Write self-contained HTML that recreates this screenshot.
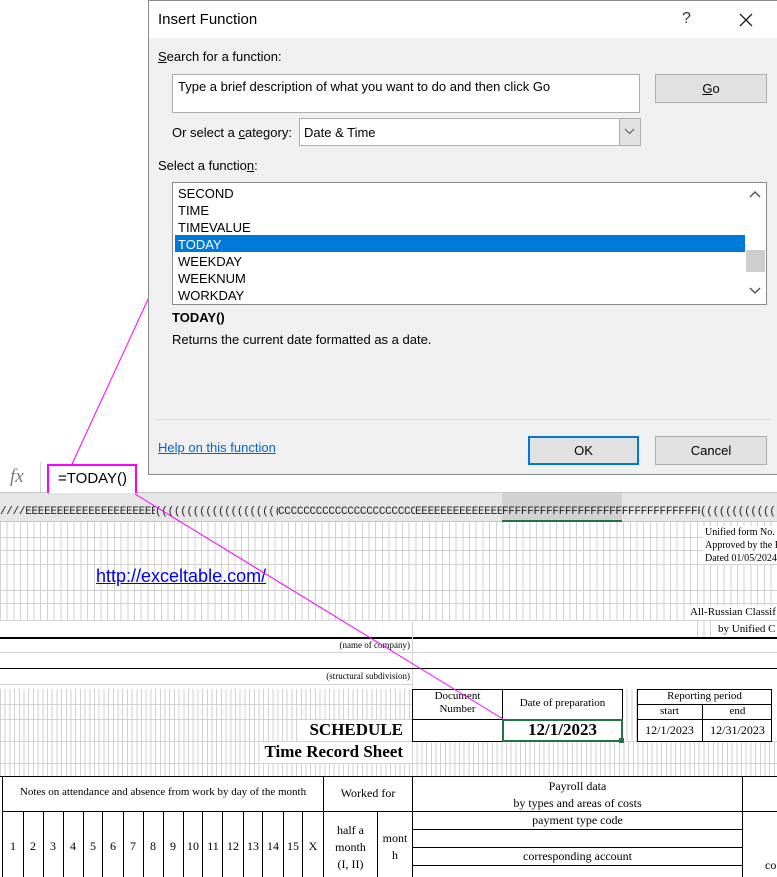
<!DOCTYPE html>
<html><head><meta charset="utf-8"><style>
*{margin:0;padding:0;box-sizing:border-box}
body{width:777px;height:877px;overflow:hidden;background:#fff;position:relative;font-family:"Liberation Sans",sans-serif}
.a{position:absolute}
.s{font-family:"Liberation Serif",serif;color:#000;white-space:nowrap}
.g1{background-color:#fff;background-image:repeating-linear-gradient(90deg,#d2d2d2 0 1px,transparent 1px 6.7px)}
.g2{background-color:#fff;background-image:repeating-linear-gradient(90deg,#d2d2d2 0 1px,transparent 1px 4.7px)}
.h{height:1px;background:#d2d2d2}
.bk{background:#000}
.d{font-size:13px;color:#000;white-space:nowrap}
.btn{background:#e1e1e1;border:1px solid #adadad;text-align:center;font-size:13px}
.c{text-align:center}
.hl{position:absolute;top:505px;height:15px;overflow:hidden;font-family:"Liberation Mono",monospace;font-size:11px;line-height:15px;color:#222;white-space:nowrap;letter-spacing:-0.3px}
</style></head><body>

<!-- formula bar -->
<div class="a" style="left:0;top:462px;width:777px;height:31px;background:#fff;border-bottom:1px solid #c6c6c6"></div>
<div class="a" style="left:0;top:462px;width:41px;height:30px;border-right:1px solid #d4d4d4;font-family:'Liberation Serif',serif;font-style:italic;color:#777;font-size:19px;padding:4px 0 0 10px">fx</div>
<div class="a" style="left:47px;top:464px;width:90px;height:31px;border:2px solid #f0f;background:#fff;font-size:15px;padding:4px 0 0 9px">=TODAY()</div>

<!-- column header -->
<div class="a" style="left:0;top:493px;width:777px;height:29px;background:#e6e6e6;border-bottom:1px solid #c8c8c8"></div>
<div class="a" style="left:502px;top:493px;width:120px;height:29px;background:#d2d2d2;border-bottom:2px solid #217346"></div>
<div class="hl" style="left:0;width:155px">////EEEEEEEEEEEEEEEEEEEEEEEEEEEEEE</div>
<div class="hl" style="left:155px;width:123px">((((((((((((((((((((((((((((</div>
<div class="hl" style="left:278px;width:137px">CCCCCCCCCCCCCCCCCCCCCCCCCCCC</div>
<div class="hl" style="left:415px;width:87px">EEEEEEEEEEEEEEEEEEEE</div>
<div class="hl" style="left:502px;width:198px">FFFFFFFFFFFFFFFFFFFFFFFFFFFFFFFFFFFFFFFFFF</div>
<div class="hl" style="left:700px;width:77px">((((((((((((((((((</div>

<!-- upper grid -->
<div class="a g1" style="left:0;top:522px;width:777px;height:115px"></div>
<div class="a h" style="left:0;top:537px;width:777px"></div>
<div class="a h" style="left:0;top:550px;width:777px"></div>
<div class="a h" style="left:0;top:564px;width:777px"></div>
<div class="a h" style="left:0;top:590px;width:777px"></div>
<div class="a h" style="left:0;top:603px;width:777px"></div>
<div class="a h" style="left:0;top:620px;width:777px"></div>
<div class="a" style="left:703px;top:526px;width:74px;height:38px;background:#fff"></div>
<div class="a s" style="left:705px;top:526px;font-size:10px;line-height:13px">Unified form No. T<br>Approved by the R<br>Dated 01/05/2024</div>
<div class="a" style="left:96px;top:566px;font-size:18px;color:#00e;text-decoration:underline">http://exceltable.com/</div>
<div class="a" style="left:688px;top:606px;width:89px;height:14px;background:#fff"></div>
<div class="a s" style="left:690px;top:606px;font-size:11px">All-Russian Classif</div>
<div class="a" style="left:0;top:621px;width:697px;height:16px;background:#fff"></div>
<div class="a" style="left:412px;top:621px;width:1px;height:16px;background:#d4d4d4"></div>
<div class="a" style="left:713px;top:621px;width:64px;height:16px;background:#fff"></div>
<div class="a s" style="left:718px;top:623px;font-size:11px">by Unified C</div>

<!-- company rows -->
<div class="a" style="left:0;top:637px;width:777px;height:52px;background:#fff"></div>
<div class="a bk" style="left:0;top:637px;width:777px;height:2px"></div>
<div class="a" style="left:412px;top:637px;width:1px;height:52px;background:#d4d4d4"></div>
<div class="a h" style="left:0;top:652px;width:777px"></div>
<div class="a s" style="left:300px;top:640px;width:110px;text-align:right;font-size:9px">(name of company)</div>
<div class="a bk" style="left:0;top:668px;width:777px;height:1px"></div>
<div class="a s" style="left:250px;top:671px;width:160px;text-align:right;font-size:9px">(structural subdivision)</div>
<div class="a h" style="left:0;top:684px;width:412px"></div>

<!-- schedule area grid -->
<div class="a g2" style="left:0;top:689px;width:412px;height:87px"></div>
<div class="a g2" style="left:622px;top:689px;width:15px;height:87px"></div>
<div class="a g2" style="left:412px;top:741px;width:365px;height:35px"></div>
<div class="a h" style="left:0;top:704px;width:412px"></div>
<div class="a h" style="left:0;top:719px;width:412px"></div>
<div class="a h" style="left:0;top:741px;width:777px"></div>
<div class="a h" style="left:0;top:763px;width:777px"></div>
<div class="a" style="left:300px;top:720px;width:110px;height:21px;background:#fff"></div>
<div class="a s" style="left:200px;top:720px;width:203px;text-align:right;font-size:17px;font-weight:bold">SCHEDULE</div>
<div class="a" style="left:260px;top:742px;width:150px;height:21px;background:#fff"></div>
<div class="a s" style="left:200px;top:742px;width:203px;text-align:right;font-size:17px;font-weight:bold">Time Record Sheet</div>

<div class="a" style="left:412px;top:689px;width:211px;height:53px;border:1px solid #000;background:#fff"></div>
<div class="a bk" style="left:502px;top:689px;width:1px;height:52px"></div>
<div class="a bk" style="left:412px;top:719px;width:211px;height:1px"></div>
<div class="a s c" style="left:413px;top:690px;width:89px;font-size:11px;line-height:13px">Document<br>Number</div>
<div class="a s c" style="left:503px;top:697px;width:119px;font-size:11px">Date of preparation</div>
<div class="a" style="left:502px;top:719px;width:121px;height:23px;border:2px solid #217346"></div>
<div class="a" style="left:619px;top:738px;width:5px;height:5px;background:#217346"></div>
<div class="a s c" style="left:503px;top:720px;width:119px;font-size:17px;font-weight:bold">12/1/2023</div>

<div class="a" style="left:637px;top:689px;width:135px;height:53px;border:1px solid #000;background:#fff"></div>
<div class="a bk" style="left:637px;top:704px;width:135px;height:1px"></div>
<div class="a bk" style="left:637px;top:719px;width:135px;height:1px"></div>
<div class="a bk" style="left:702px;top:704px;width:1px;height:38px"></div>
<div class="a s c" style="left:637px;top:690px;width:135px;font-size:11px">Reporting period</div>
<div class="a s c" style="left:637px;top:705px;width:65px;font-size:11px">start</div>
<div class="a s c" style="left:703px;top:705px;width:69px;font-size:11px">end</div>
<div class="a s c" style="left:637px;top:723px;width:65px;font-size:12px">12/1/2023</div>
<div class="a s c" style="left:703px;top:723px;width:69px;font-size:12px">12/31/2023</div>

<!-- lower table -->
<div class="a" style="left:0;top:776px;width:777px;height:101px;background:#fff"></div>
<div class="a bk" style="left:0;top:776px;width:777px;height:1px"></div>
<div class="a bk" style="left:2px;top:776px;width:1px;height:101px"></div>
<div class="a bk" style="left:323px;top:776px;width:1px;height:101px"></div>
<div class="a bk" style="left:412px;top:776px;width:1px;height:101px"></div>
<div class="a bk" style="left:742px;top:776px;width:1px;height:101px"></div>
<div class="a bk" style="left:2px;top:811px;width:410px;height:1px"></div>
<div class="a bk" style="left:412px;top:811px;width:365px;height:1px"></div>
<div class="a bk" style="left:412px;top:829px;width:330px;height:1px"></div>
<div class="a bk" style="left:412px;top:847px;width:330px;height:1px"></div>
<div class="a bk" style="left:412px;top:865px;width:330px;height:1px"></div>
<div class="a bk" style="left:377px;top:811px;width:1px;height:66px"></div>
<div class="a s c" style="left:3px;top:786px;width:320px;font-size:11px">Notes on attendance and absence from work by day of the month</div>
<div class="a s c" style="left:324px;top:786px;width:88px;font-size:12px">Worked for</div>
<div class="a s c" style="left:413px;top:778px;width:329px;font-size:12px;line-height:17px">Payroll data<br>by types and areas of costs</div>
<div class="a s c" style="left:413px;top:813px;width:329px;font-size:12px">payment type code</div>
<div class="a s c" style="left:413px;top:849px;width:329px;font-size:12px">corresponding account</div>
<div class="a s c" style="left:324px;top:822px;width:53px;font-size:12px;line-height:17px">half a<br>month<br>(I, II)</div>
<div class="a s c" style="left:378px;top:830px;width:34px;font-size:12px;line-height:17px">mont<br>h</div>
<div class="a s" style="left:765px;top:858px;font-size:12px">co</div>

<div class="a bk" style="left:23px;top:811px;width:1px;height:66px"></div>
<div class="a bk" style="left:43px;top:811px;width:1px;height:66px"></div>
<div class="a bk" style="left:63px;top:811px;width:1px;height:66px"></div>
<div class="a bk" style="left:83px;top:811px;width:1px;height:66px"></div>
<div class="a bk" style="left:102px;top:811px;width:1px;height:66px"></div>
<div class="a bk" style="left:123px;top:811px;width:1px;height:66px"></div>
<div class="a bk" style="left:143px;top:811px;width:1px;height:66px"></div>
<div class="a bk" style="left:163px;top:811px;width:1px;height:66px"></div>
<div class="a bk" style="left:183px;top:811px;width:1px;height:66px"></div>
<div class="a bk" style="left:202px;top:811px;width:1px;height:66px"></div>
<div class="a bk" style="left:222px;top:811px;width:1px;height:66px"></div>
<div class="a bk" style="left:243px;top:811px;width:1px;height:66px"></div>
<div class="a bk" style="left:262px;top:811px;width:1px;height:66px"></div>
<div class="a bk" style="left:283px;top:811px;width:1px;height:66px"></div>
<div class="a bk" style="left:302px;top:811px;width:1px;height:66px"></div>
<div class="a s" style="left:3px;top:839px;width:320px;font-size:12px;display:flex">
<span class="c" style="width:20px">1</span><span class="c" style="width:20px">2</span><span class="c" style="width:20px">3</span><span class="c" style="width:20px">4</span><span class="c" style="width:20px">5</span><span class="c" style="width:20px">6</span><span class="c" style="width:20px">7</span><span class="c" style="width:20px">8</span><span class="c" style="width:20px">9</span><span class="c" style="width:20px">10</span><span class="c" style="width:20px">11</span><span class="c" style="width:20px">12</span><span class="c" style="width:20px">13</span><span class="c" style="width:20px">14</span><span class="c" style="width:20px">15</span><span class="c" style="width:20px">X</span></div>

<!-- pink connector lines -->
<svg class="a" style="left:0;top:0" width="777" height="877"><line x1="150" y1="295" x2="72" y2="464" stroke="#f0f" stroke-width="1"/><line x1="135" y1="494" x2="503" y2="719" stroke="#f0f" stroke-width="1"/></svg>

<!-- dialog -->
<div class="a" style="left:148px;top:0;width:640px;height:475px;background:#f0f0f0;border:1px solid #8a8a8a">
  <div class="a" style="left:0;top:0;width:640px;height:37px;background:#fff"></div>
  <div class="a" style="left:9px;top:10px;font-size:15px;color:#000">Insert Function</div>
  <div class="a" style="left:533px;top:9px;font-size:16px;color:#333">?</div>
  <svg class="a" style="left:590px;top:12px" width="14" height="14"><path d="M1 1L13 13M13 1L1 13" stroke="#222" stroke-width="1.3"/></svg>
  <div class="a d" style="left:9px;top:48px"><u>S</u>earch for a function:</div>
  <div class="a" style="left:23px;top:73px;width:468px;height:39px;background:#fff;border:1px solid #adadad"></div>
  <div class="a d" style="left:29px;top:78px">Type a brief description of what you want to do and then click Go</div>
  <div class="a btn" style="left:506px;top:73px;width:112px;height:29px;line-height:27px"><u>G</u>o</div>
  <div class="a d" style="left:23px;top:124px">Or select a <u>c</u>ategory:</div>
  <div class="a" style="left:150px;top:117px;width:342px;height:28px;background:#fff;border:1px solid #adadad"></div>
  <div class="a d" style="left:155px;top:124px">Date &amp; Time</div>
  <div class="a" style="left:470px;top:118px;width:21px;height:26px;background:#e1e1e1;border-left:1px solid #adadad"></div>
  <svg class="a" style="left:475px;top:127px" width="11" height="7"><path d="M1 1L5.5 5.5L10 1" stroke="#555" fill="none"/></svg>
  <div class="a d" style="left:9px;top:157px">Select a functio<u>n</u>:</div>
  <div class="a" style="left:23px;top:181px;width:595px;height:123px;background:#fff;border:1px solid #8a8a8a"></div>
  <div class="a" style="left:26px;top:234px;width:570px;height:17px;background:#0078d7"></div>
  <div class="a d" style="left:29px;top:184px;line-height:17px">SECOND<br>TIME<br>TIMEVALUE<br><span style="color:#fff">TODAY</span><br>WEEKDAY<br>WEEKNUM<br>WORKDAY</div>
  <div class="a" style="left:597px;top:249px;width:19px;height:22px;background:#cdcdcd"></div>
  <svg class="a" style="left:600px;top:189px" width="12" height="8"><path d="M1 7L6 2L11 7" stroke="#555" fill="none" stroke-width="1.5"/></svg>
  <svg class="a" style="left:600px;top:286px" width="12" height="8"><path d="M1 1L6 6L11 1" stroke="#555" fill="none" stroke-width="1.5"/></svg>
  <div class="a d" style="left:23px;top:309px;font-weight:bold">TODAY()</div>
  <div class="a d" style="left:23px;top:331px">Returns the current date formatted as a date.</div>
  <div class="a" style="left:7px;top:418px;width:615px;height:1px;background:#dcdcdc"></div>
  <div class="a d" style="left:9px;top:439px;color:#0066cc;text-decoration:underline">Help on this function</div>
  <div class="a btn" style="left:379px;top:435px;width:111px;height:29px;line-height:25px;border:2px solid #0078d7">OK</div>
  <div class="a btn" style="left:506px;top:435px;width:112px;height:29px;line-height:27px">Cancel</div>
</div>
</body></html>
